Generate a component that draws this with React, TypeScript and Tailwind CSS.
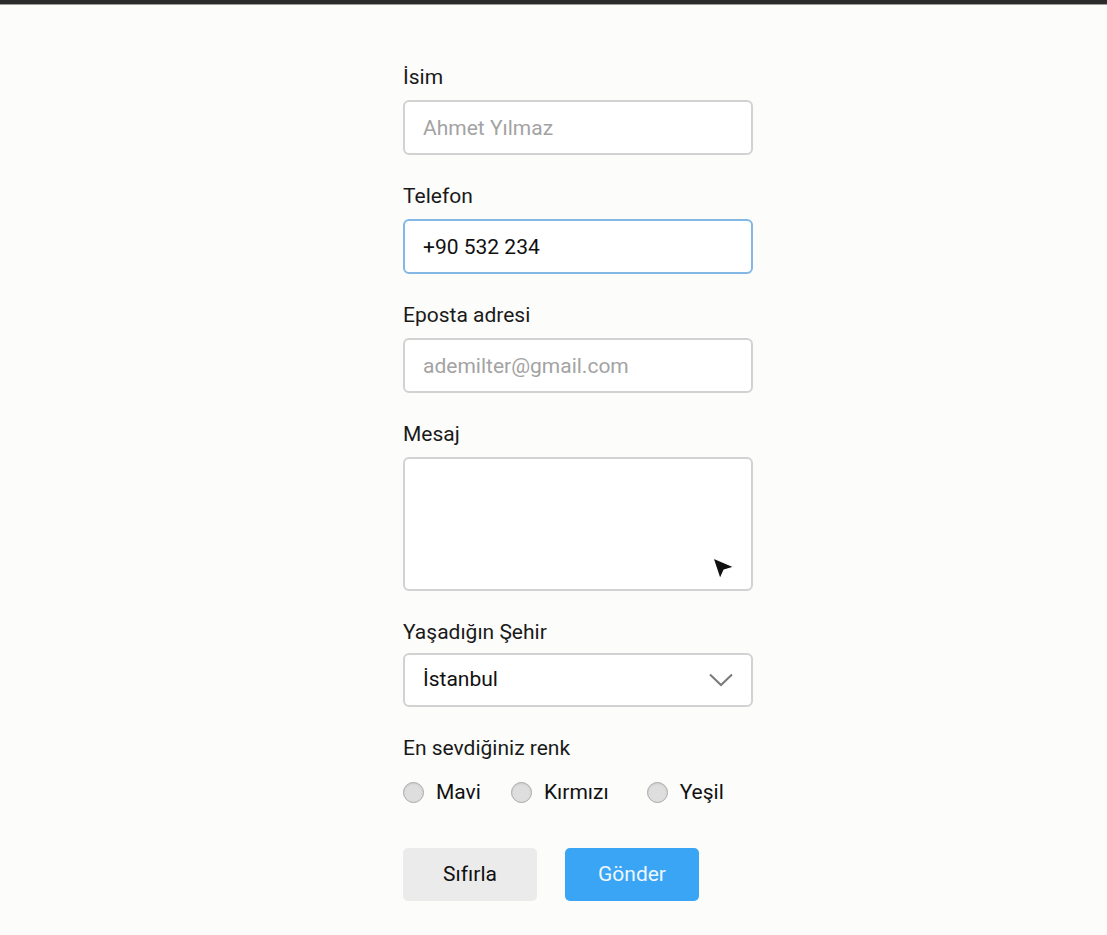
import React, { useState } from "react";

const labelCls = "block text-[21px] leading-[24px] text-[#1a1a1a] mb-[11px]";
const boxCls =
  "w-full border-2 rounded-[6px] bg-white px-[18px] text-[21px] text-[#111] outline-none placeholder:text-[#a3a3a3]";

const Radio = ({ label, checked, onClick }: { label: string; checked: boolean; onClick: () => void }) => (
  <label className="flex items-center cursor-pointer" onClick={onClick}>
    <span className="w-[21px] h-[21px] rounded-full border border-[#a9a9a9] bg-[#dedede] shadow-[inset_0_1px_2px_rgba(0,0,0,0.08)] flex items-center justify-center">
      {checked && <span className="w-[9px] h-[9px] rounded-full bg-[#3aa5f5]" />}
    </span>
    <span className="ml-[12px] text-[21px] leading-[24px] text-[#111]">{label}</span>
  </label>
);

const App = () => {
  const [phone, setPhone] = useState("+90 532 234");
  const [color, setColor] = useState("");

  return (
    <div className="min-h-screen bg-[#fcfcfa] relative" style={{ fontFamily: "Roboto, 'Noto Sans', sans-serif" }}>
      <div className="h-[4px] bg-[#2b2b2b]" />
      <div className="h-[1px] bg-[#9c9c9c]" />

      <form className="ml-[403px] w-[350px] pt-[60px] flex flex-col gap-[29px]" onSubmit={(e) => e.preventDefault()}>
        <div>
          <label className={labelCls}>İsim</label>
          <input className={`${boxCls} border-[#d2d2d2] h-[55px]`} placeholder="Ahmet Yılmaz" />
        </div>
        <div>
          <label className={labelCls}>Telefon</label>
          <input
            className={`${boxCls} h-[55px] border-[#82b8e3]`}
            value={phone}
            onChange={(e) => setPhone(e.target.value)}
          />
        </div>
        <div>
          <label className={labelCls}>Eposta adresi</label>
          <input className={`${boxCls} border-[#d2d2d2] h-[55px]`} placeholder="ademilter@gmail.com" />
        </div>
        <div>
          <label className={labelCls}>Mesaj</label>
          <textarea className={`${boxCls} border-[#d2d2d2] h-[134px] block resize-none py-3`} />
        </div>
        <div>
          <label className="block text-[21px] leading-[24px] text-[#1a1a1a] mb-[9px]">Yaşadığın Şehir</label>
          <div className={`${boxCls} border-[#d2d2d2] h-[54px] flex items-center justify-between pr-[18px]`}>
            <span>İstanbul</span>
            <svg width="24" height="14" viewBox="0 0 24 14" fill="none" stroke="#7a7a7a" strokeWidth="2">
              <path d="M1 1.5 L12 12 L23 1.5" />
            </svg>
          </div>
        </div>
        <div>
          <div className="text-[21px] leading-[24px] text-[#1a1a1a]">En sevdiğiniz renk</div>
          <div className="flex mt-[20px]">
            <Radio label="Mavi" checked={color === "mavi"} onClick={() => setColor("mavi")} />
            <div className="ml-[30px]">
              <Radio label="Kırmızı" checked={color === "kirmizi"} onClick={() => setColor("kirmizi")} />
            </div>
            <div className="ml-[38px]">
              <Radio label="Yeşil" checked={color === "yesil"} onClick={() => setColor("yesil")} />
            </div>
          </div>
        </div>
        <div className="flex gap-[28px] mt-[15px]">
          <button type="reset" className="w-[134px] h-[53px] rounded-[5px] bg-[#ebebeb] text-[21px] text-[#111]">
            Sıfırla
          </button>
          <button type="submit" className="w-[134px] h-[53px] rounded-[5px] bg-[#3aa5f5] text-[21px] text-[#eef7ff]">
            Gönder
          </button>
        </div>
      </form>

      <svg className="absolute left-[711px] top-[556px]" width="26" height="26" viewBox="0 0 26 26">
        <path d="M2 2 L23 11 L13 14 L9 23 Z" fill="#111" stroke="#fff" strokeWidth="1.2" strokeLinejoin="round" />
      </svg>
    </div>
  );
};

export default App;
